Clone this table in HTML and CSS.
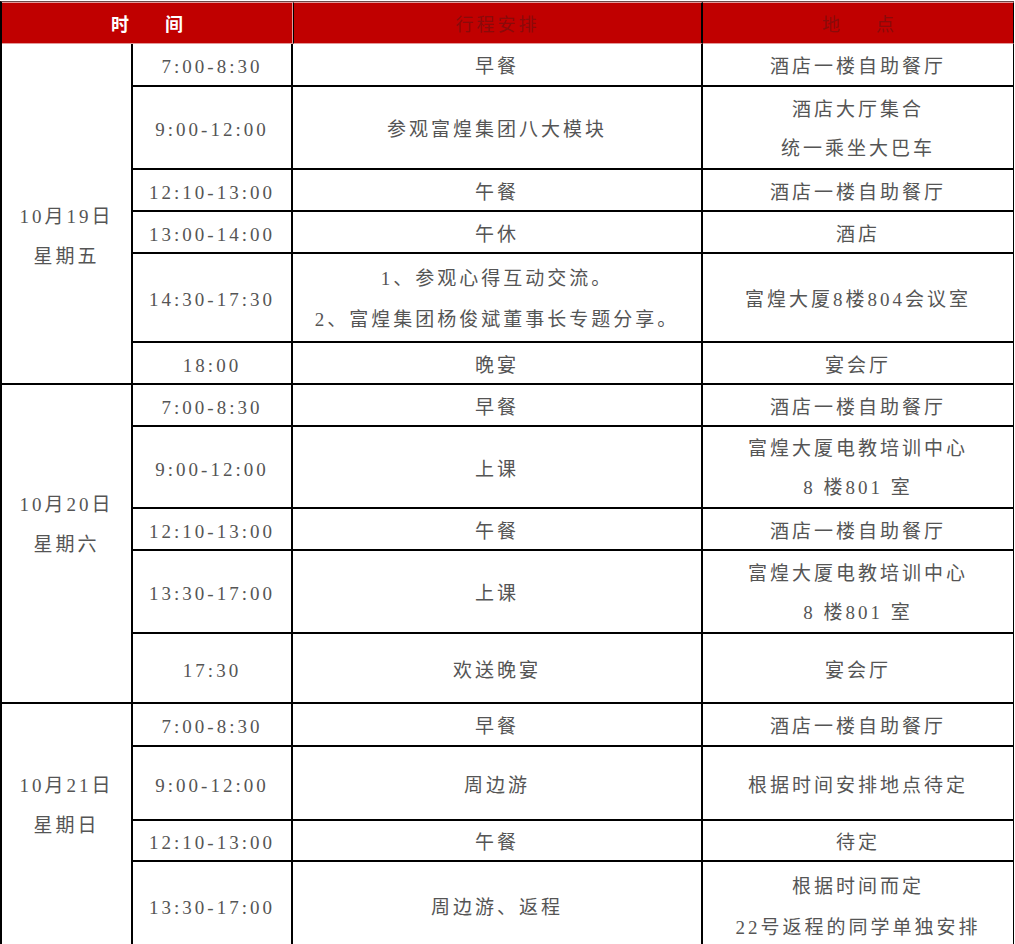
FILE: index.html
```html
<!DOCTYPE html>
<html lang="zh-CN">
<head>
<meta charset="utf-8">
<title>行程安排</title>
<link rel="stylesheet" href="styles.css">
</head>
<body>
<table class="plan">
  <colgroup>
    <col class="c1"><col class="c2"><col class="c3"><col class="c4">
  </colgroup>
  <thead>
    <tr class="head">
      <th colspan="2" class="h-time">时　　间</th>
      <th class="h-plan">行程安排</th>
      <th class="h-place">地　　点</th>
    </tr>
  </thead>
  <tbody>
    <tr class="r43">
      <td rowspan="6" class="date d1">10月19日<br>星期五</td>
      <td>7:00-8:30</td><td>早餐</td><td>酒店一楼自助餐厅</td>
    </tr>
    <tr class="r83"><td>9:00-12:00</td><td>参观富煌集团八大模块</td><td class="ml">酒店大厅集合<br>统一乘坐大巴车</td></tr>
    <tr class="r42"><td>12:10-13:00</td><td>午餐</td><td>酒店一楼自助餐厅</td></tr>
    <tr class="r42"><td>13:00-14:00</td><td>午休</td><td>酒店</td></tr>
    <tr class="r89"><td>14:30-17:30</td><td class="ml ml-wide">1、参观心得互动交流。<br>2、富煌集团杨俊斌董事长专题分享。</td><td>富煌大厦8楼804会议室</td></tr>
    <tr class="r42"><td>18:00</td><td>晚宴</td><td>宴会厅</td></tr>

    <tr class="r42">
      <td rowspan="5" class="date d2">10月20日<br>星期六</td>
      <td>7:00-8:30</td><td>早餐</td><td>酒店一楼自助餐厅</td>
    </tr>
    <tr class="r82"><td>9:00-12:00</td><td>上课</td><td class="ml">富煌大厦电教培训中心<br>8 楼801 室</td></tr>
    <tr class="r42"><td>12:10-13:00</td><td>午餐</td><td>酒店一楼自助餐厅</td></tr>
    <tr class="r83"><td>13:30-17:00</td><td>上课</td><td class="ml">富煌大厦电教培训中心<br>8 楼801 室</td></tr>
    <tr class="r70"><td>17:30</td><td>欢送晚宴</td><td>宴会厅</td></tr>

    <tr class="r43">
      <td rowspan="4" class="date d3">10月21日<br>星期日</td>
      <td>7:00-8:30</td><td>早餐</td><td>酒店一楼自助餐厅</td>
    </tr>
    <tr class="r74"><td>9:00-12:00</td><td>周边游</td><td>根据时间安排地点待定</td></tr>
    <tr class="r41"><td>12:10-13:00</td><td>午餐</td><td>待定</td></tr>
    <tr class="r88"><td>13:30-17:00</td><td>周边游、返程</td><td class="ml ml-wide">根据时间而定<br>22号返程的同学单独安排</td></tr>
  </tbody>
</table>
</body>
</html>
```

FILE: styles.css
```css
html, body {
  margin: 0;
  padding: 0;
  background: #ffffff;
}

.plan {
  margin-top: 1px;
  border-collapse: separate;
  border-spacing: 0;
  table-layout: fixed;
  width: 1014px;
  border-left: 2px solid #000;
  border-top: 1px solid #6b4a4a;
  font-family: "Liberation Serif", "Noto Sans CJK SC", serif;
  font-size: 19px;
  letter-spacing: 3px;
  color: #555555;
}

.c1 { width: 131px; }
.c2 { width: 160px; }
.c3 { width: 410px; }
.c4 { width: 311px; }

.head th {
  height: 40px;
  padding: 0;
  background: #c00000;
  border-top: 1px solid #e39a9a;
  border-bottom: 1px solid #e39a9a;
  font-weight: normal;
  font-size: 18px;
  line-height: 40px;
  vertical-align: middle;
  text-align: center;
  font-family: "Noto Sans CJK SC", sans-serif;
}

.head .h-time {
  color: #ffffff;
  font-weight: bold;
  letter-spacing: 0;
  border-right: 1px solid #e39a9a;
}

.head .h-plan {
  color: #8a0a0a;
  letter-spacing: 3px;
  border-left: 1px solid #000;
  border-right: 2px solid #000;
}

.head .h-place {
  color: #8a0a0a;
  letter-spacing: 0;
  border-right: 1px solid #000;
}

.plan td {
  padding: 4px 0 0 0;
  text-align: center;
  vertical-align: middle;
  line-height: 35px;
  border-right: 2px solid #000;
  border-bottom: 2px solid #000;
  white-space: nowrap;
}

.plan td.ml {
  padding-top: 2px;
  line-height: 39px;
}

.plan td.ml-wide {
  padding-top: 3px;
  line-height: 41px;
}

.plan td:last-child {
  border-right: 1px solid #000;
}

.plan td.date {
  vertical-align: top;
  line-height: 40px;
  border-right: 2px solid #000;
}

.plan td.d1 { padding-top: 153px; }
.plan td.d2 { padding-top: 100px; }
.plan td.d3 { padding-top: 62px; }

.r41 { height: 41px; }
.r42 { height: 42px; }
.r43 { height: 43px; }
.r70 { height: 70px; }
.r74 { height: 74px; }
.r82 { height: 82px; }
.r83 { height: 83px; }
.r88 { height: 88px; }
.r89 { height: 89px; }
```
